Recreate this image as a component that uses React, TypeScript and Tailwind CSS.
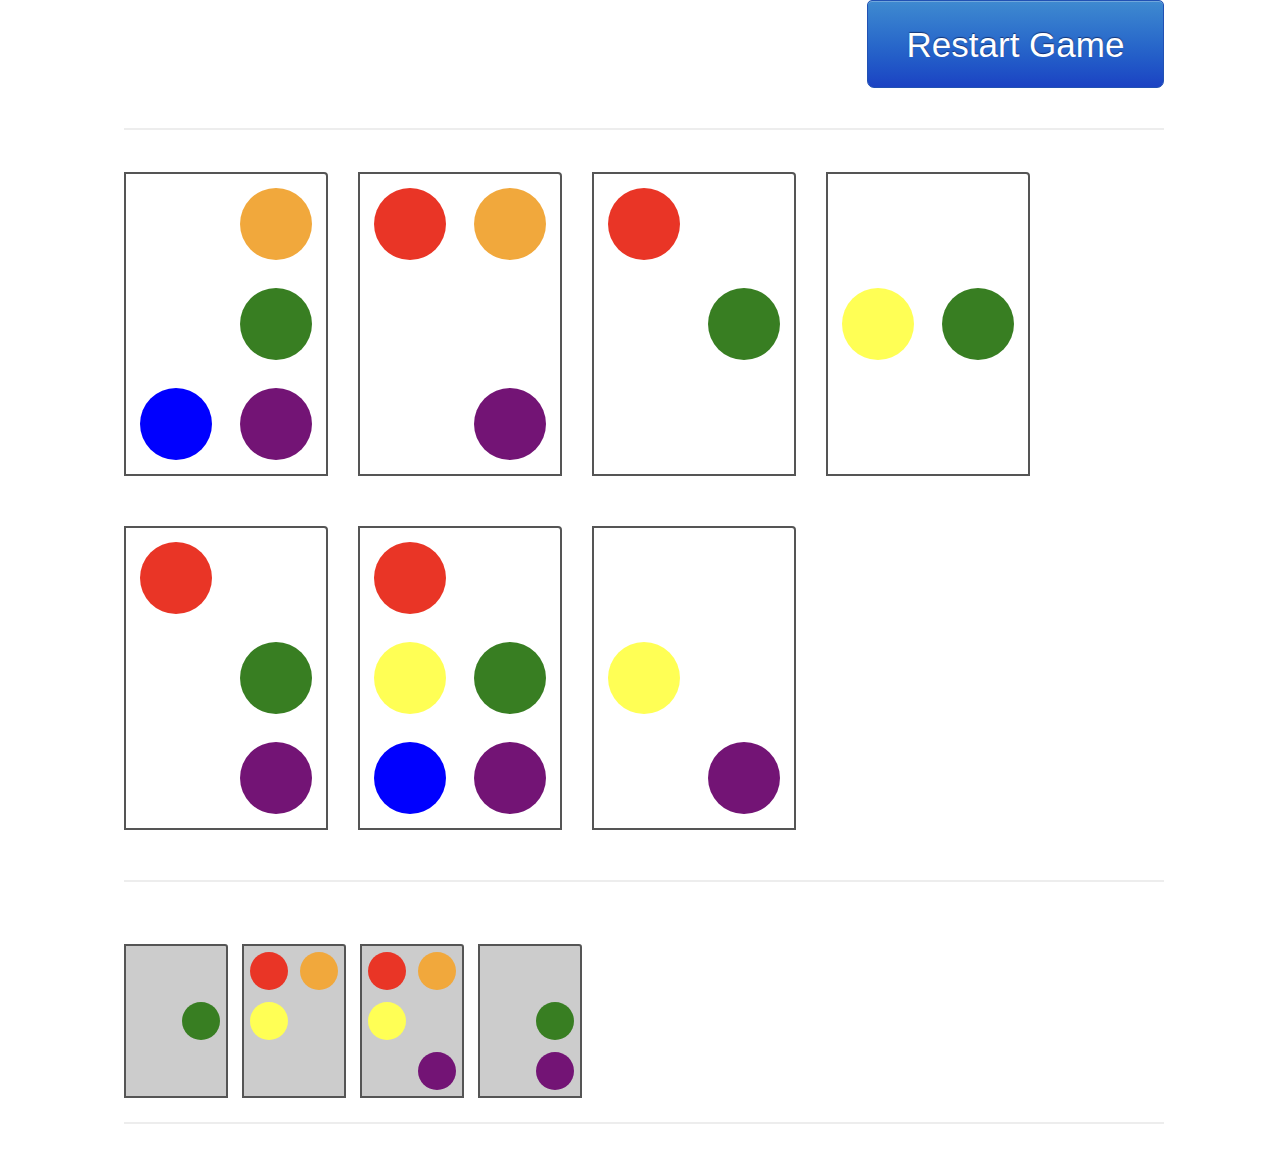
import React from 'react';

type Dot = 'red' | 'orange' | 'yellow' | 'green' | 'blue' | 'purple';

// slot order in the 2x3 grid
const SLOTS: Dot[] = ['red', 'orange', 'yellow', 'green', 'blue', 'purple'];

const dotColor: Record<Dot, string> = {
    red: 'bg-[#e93526]',
    orange: 'bg-[#f1a83c]',
    yellow: 'bg-[#ffff55]',
    green: 'bg-[#387e22]',
    blue: 'bg-[#0000ff]',
    purple: 'bg-[#731475]'
};

const board: Dot[][] = [
    ['orange', 'green', 'blue', 'purple'],
    ['red', 'orange', 'purple'],
    ['red', 'green'],
    ['yellow', 'green'],
    ['red', 'green', 'purple'],
    ['red', 'yellow', 'green', 'blue', 'purple'],
    ['yellow', 'purple']
];

const found: Dot[][] = [
    ['green'],
    ['red', 'orange', 'yellow'],
    ['red', 'orange', 'yellow', 'purple'],
    ['green', 'purple']
];

function Card({ dots, small }: { dots: Dot[]; small?: boolean }) {
    return (
        <div
            className={
                small
                    ? 'grid grid-cols-[50px_50px] grid-rows-[50px_50px_50px] border-2 border-[#555] rounded-tr-[3px] bg-[#cccccc]'
                    : 'grid grid-cols-[100px_100px] grid-rows-[100px_100px_100px] border-2 border-[#555] rounded-tr-[4px] bg-white'
            }>
            {SLOTS.map((s) => (
                <div key={s} className="flex items-center justify-center">
                    {dots.includes(s) && (
                        <div className={`${small ? 'w-[38px] h-[38px]' : 'w-[72px] h-[72px]'} rounded-full ${dotColor[s]}`} />
                    )}
                </div>
            ))}
        </div>
    );
}

export default function App() {
    return (
        <div className="min-h-[1176px] bg-white font-['Liberation_Sans',Arial,sans-serif]">
            <div className="ml-[124px] w-[1040px]">
                <div className="flex justify-end">
                    <button className="w-[297px] h-[88px] pt-[2px] rounded-b-[7px] rounded-t-[5px] border border-[#2151b3] bg-gradient-to-b from-[#3f8ad0] to-[#1c42c3] text-white text-[35px] [text-shadow:0_-1px_1px_rgba(0,0,40,0.5)] shadow-[inset_0_1px_0_rgba(255,255,255,0.25)]">
                        Restart Game
                    </button>
                </div>

                <div className="mt-[40px] h-[2px] bg-[#ededed]" />

                <div className="mt-[42px] grid grid-cols-[repeat(4,204px)] gap-x-[30px] gap-y-[50px]">
                    {board.map((c, i) => (
                        <Card key={i} dots={c} />
                    ))}
                </div>

                <div className="mt-[50px] h-[2px] bg-[#ededed]" />

                <div className="mt-[62px] flex gap-[14px]">
                    {found.map((c, i) => (
                        <Card key={i} dots={c} small />
                    ))}
                </div>

                <div className="mt-[24px] h-[2px] bg-[#ededed]" />
            </div>
        </div>
    );
}
